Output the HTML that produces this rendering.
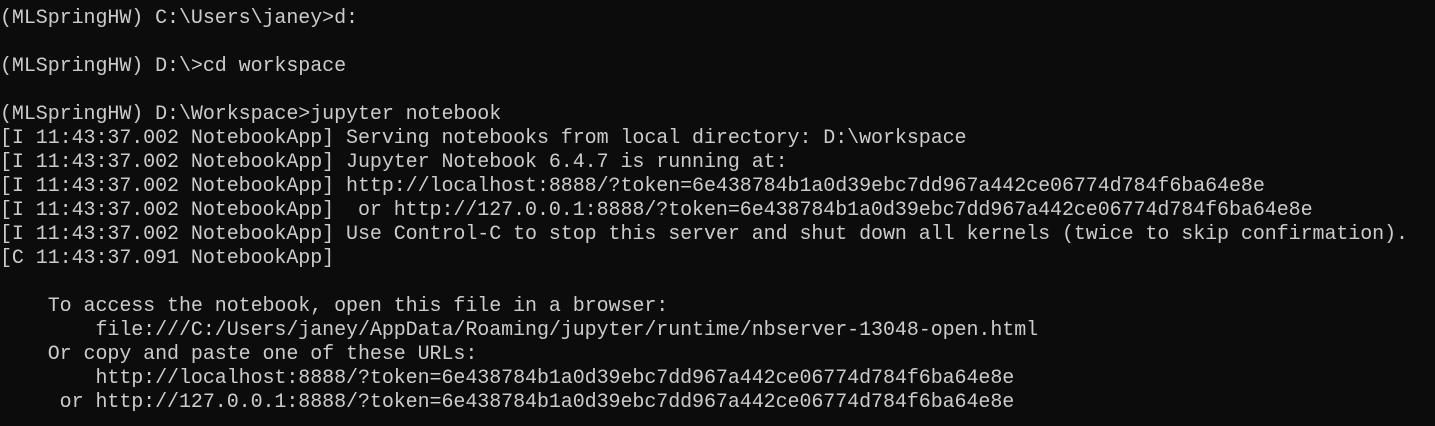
<!DOCTYPE html>
<html><head><meta charset="utf-8"><style>
html,body{margin:0;padding:0;background:#0c0c0c;width:1435px;height:426px;overflow:hidden}
pre{margin:0;position:absolute;left:0;top:7px;font-family:"Liberation Mono",monospace;font-size:20px;letter-spacing:-0.07px;line-height:24px;color:#cccccc;white-space:pre}
</style></head><body><pre>(MLSpringHW) C:\Users\janey&gt;d:

(MLSpringHW) D:\&gt;cd workspace

(MLSpringHW) D:\Workspace&gt;jupyter notebook
[I 11:43:37.002 NotebookApp] Serving notebooks from local directory: D:\workspace
[I 11:43:37.002 NotebookApp] Jupyter Notebook 6.4.7 is running at:
[I 11:43:37.002 NotebookApp] http://localhost:8888/?token=6e438784b1a0d39ebc7dd967a442ce06774d784f6ba64e8e
[I 11:43:37.002 NotebookApp]  or http://127.0.0.1:8888/?token=6e438784b1a0d39ebc7dd967a442ce06774d784f6ba64e8e
[I 11:43:37.002 NotebookApp] Use Control-C to stop this server and shut down all kernels (twice to skip confirmation).
[C 11:43:37.091 NotebookApp]

    To access the notebook, open this file in a browser:
        file:///C:/Users/janey/AppData/Roaming/jupyter/runtime/nbserver-13048-open.html
    Or copy and paste one of these URLs:
        http://localhost:8888/?token=6e438784b1a0d39ebc7dd967a442ce06774d784f6ba64e8e
     or http://127.0.0.1:8888/?token=6e438784b1a0d39ebc7dd967a442ce06774d784f6ba64e8e</pre></body></html>
